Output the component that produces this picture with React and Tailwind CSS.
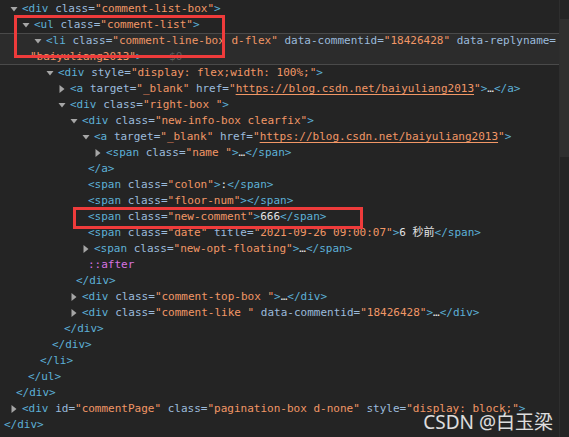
import React from "react";

const Tg = ({ children }) => <span className="text-[#5db0d7]">{children}</span>;
const An = ({ children }) => <span className="text-[#9bbbdc]">{children}</span>;
const Av = ({ children, link }) => (
  <span className={link ? "text-[#f29766] underline underline-offset-2" : "text-[#f29766]"}>{children}</span>
);
const Tx = ({ children }) => <span className="text-[#e3e3e3]">{children}</span>;

const Attr = ({ n, v, link }) => (
  <>
    {" "}
    <An>{n}=</An>
    <Av>"</Av>
    <Av link={link}>{v}</Av>
    <Av>"</Av>
  </>
);

function Down() {
  return (
    <svg width="12" height="16" viewBox="0 0 12 16" className="shrink-0">
      <path d="M0.5 6 L7.5 6 L4 10.5 Z" fill="#a6a6a6" />
    </svg>
  );
}
function Right() {
  return (
    <svg width="12" height="16" viewBox="0 0 12 16" className="shrink-0">
      <path d="M1.5 4 L6.5 8 L1.5 12 Z" fill="#a6a6a6" />
    </svg>
  );
}

function Line({ pl, arrow, children }) {
  return (
    <div className={"flex h-4 items-center whitespace-pre " + pl}>
      {arrow === "down" ? <Down /> : arrow === "right" ? <Right /> : null}
      <span className="leading-4">{children}</span>
    </div>
  );
}

export default function App() {
  return (
    <div
      className="relative flex h-[437px] w-[569px] overflow-hidden bg-[#242424] text-[11px]"
      style={{ fontFamily: '"DejaVu Sans Mono", "Noto Sans CJK SC", monospace' }}
    >
      <div className="flex-1 pt-px">
        <Line pl="pl-[10px]" arrow="down">
          <Tg>&lt;div</Tg>
          <Attr n="class" v="comment-list-box" />
          <Tg>&gt;</Tg>
        </Line>
        <Line pl="pl-[22px]" arrow="down">
          <Tg>&lt;ul</Tg>
          <Attr n="class" v="comment-list" />
          <Tg>&gt;</Tg>
        </Line>
        <div className="bg-[#2c2c2c] shadow-[inset_0_1px_0_#4a4a4a,inset_0_-1px_0_#4a4a4a]">
          <Line pl="pl-[34px]" arrow="down">
            <Tg>&lt;li</Tg>
            <Attr n="class" v="comment-line-box d-flex" />
            <Attr n="data-commentid" v="18426428" />
            {" "}
            <An>data-replyname=</An>
          </Line>
          <Line pl="pl-[30px]">
            <Av>"baiyuliang2013"</Av>
            <Tg>&gt;</Tg>
            <span className="text-[#3c3c3c]"> == </span>
            <span className="text-[#5f5f5f]">$0</span>
          </Line>
        </div>
        <Line pl="pl-[46px]" arrow="down">
          <Tg>&lt;div</Tg>
          <Attr n="style" v="display: flex;width: 100%;" />
          <Tg>&gt;</Tg>
        </Line>
        <Line pl="pl-[58px]" arrow="right">
          <Tg>&lt;a</Tg>
          <Attr n="target" v="_blank" />
          {" "}
          <An>href=</An>
          <Av>"</Av>
          <Av link>https://blog.csdn.net/baiyuliang2013</Av>
          <Av>"</Av>
          <Tg>&gt;</Tg>
          <Tx>…</Tx>
          <Tg>&lt;/a&gt;</Tg>
        </Line>
        <Line pl="pl-[58px]" arrow="down">
          <Tg>&lt;div</Tg>
          <Attr n="class" v="right-box " />
          <Tg>&gt;</Tg>
        </Line>
        <Line pl="pl-[70px]" arrow="down">
          <Tg>&lt;div</Tg>
          <Attr n="class" v="new-info-box clearfix" />
          <Tg>&gt;</Tg>
        </Line>
        <Line pl="pl-[82px]" arrow="down">
          <Tg>&lt;a</Tg>
          <Attr n="target" v="_blank" />
          {" "}
          <An>href=</An>
          <Av>"</Av>
          <Av link>https://blog.csdn.net/baiyuliang2013</Av>
          <Av>"</Av>
          <Tg>&gt;</Tg>
        </Line>
        <Line pl="pl-[94px]" arrow="right">
          <Tg>&lt;span</Tg>
          <Attr n="class" v="name " />
          <Tg>&gt;</Tg>
          <Tx>…</Tx>
          <Tg>&lt;/span&gt;</Tg>
        </Line>
        <Line pl="pl-[88px]">
          <Tg>&lt;/a&gt;</Tg>
        </Line>
        <Line pl="pl-[88px]">
          <Tg>&lt;span</Tg>
          <Attr n="class" v="colon" />
          <Tg>&gt;</Tg>
          <Tx>:</Tx>
          <Tg>&lt;/span&gt;</Tg>
        </Line>
        <Line pl="pl-[88px]">
          <Tg>&lt;span</Tg>
          <Attr n="class" v="floor-num" />
          <Tg>&gt;&lt;/span&gt;</Tg>
        </Line>
        <Line pl="pl-[88px]">
          <Tg>&lt;span</Tg>
          <Attr n="class" v="new-comment" />
          <Tg>&gt;</Tg>
          <Tx>666</Tx>
          <Tg>&lt;/span&gt;</Tg>
        </Line>
        <Line pl="pl-[88px]">
          <Tg>&lt;span</Tg>
          <Attr n="class" v="date" />
          <Attr n="title" v="2021-09-26 09:00:07" />
          <Tg>&gt;</Tg>
          <Tx>6 秒前</Tx>
          <Tg>&lt;/span&gt;</Tg>
        </Line>
        <Line pl="pl-[82px]" arrow="right">
          <Tg>&lt;span</Tg>
          <Attr n="class" v="new-opt-floating" />
          <Tg>&gt;</Tg>
          <Tx>…</Tx>
          <Tg>&lt;/span&gt;</Tg>
        </Line>
        <Line pl="pl-[88px]">
          <span className="text-[#d673e0]">::after</span>
        </Line>
        <Line pl="pl-[76px]">
          <Tg>&lt;/div&gt;</Tg>
        </Line>
        <Line pl="pl-[70px]" arrow="right">
          <Tg>&lt;div</Tg>
          <Attr n="class" v="comment-top-box " />
          <Tg>&gt;</Tg>
          <Tx>…</Tx>
          <Tg>&lt;/div&gt;</Tg>
        </Line>
        <Line pl="pl-[70px]" arrow="right">
          <Tg>&lt;div</Tg>
          <Attr n="class" v="comment-like " />
          <Attr n="data-commentid" v="18426428" />
          <Tg>&gt;</Tg>
          <Tx>…</Tx>
          <Tg>&lt;/div&gt;</Tg>
        </Line>
        <Line pl="pl-[64px]">
          <Tg>&lt;/div&gt;</Tg>
        </Line>
        <Line pl="pl-[52px]">
          <Tg>&lt;/div&gt;</Tg>
        </Line>
        <Line pl="pl-[40px]">
          <Tg>&lt;/li&gt;</Tg>
        </Line>
        <Line pl="pl-[28px]">
          <Tg>&lt;/ul&gt;</Tg>
        </Line>
        <Line pl="pl-[16px]">
          <Tg>&lt;/div&gt;</Tg>
        </Line>
        <Line pl="pl-[10px]" arrow="right">
          <Tg>&lt;div</Tg>
          <Attr n="id" v="commentPage" />
          <Attr n="class" v="pagination-box d-none" />
          <Attr n="style" v="display: block;" />
          <Tg>&gt;</Tg>
        </Line>
        <Line pl="pl-[4px]">
          <Tg>&lt;/div&gt;</Tg>
        </Line>
      </div>

      <div className="w-[10px] border-l border-[#2e2e2e] pt-[19px]">
        <div className="h-[138px] bg-[#2f2f2f]" />
      </div>

      <div className="pointer-events-none absolute left-[14px] top-[15px] h-[43px] w-[211px] border-[3px] border-[#ee3b3b]" />
      <div className="pointer-events-none absolute left-[73px] top-[207px] h-[22px] w-[290px] border-[3px] border-[#ee3b3b]" />

      <div
        className="pointer-events-none absolute bottom-[2px] right-[16px] text-[19px] leading-[26px] text-white/85"
        style={{ fontFamily: '"Noto Sans", "Noto Sans CJK SC", sans-serif' }}
      >
        CSDN @白玉梁
      </div>
    </div>
  );
}
